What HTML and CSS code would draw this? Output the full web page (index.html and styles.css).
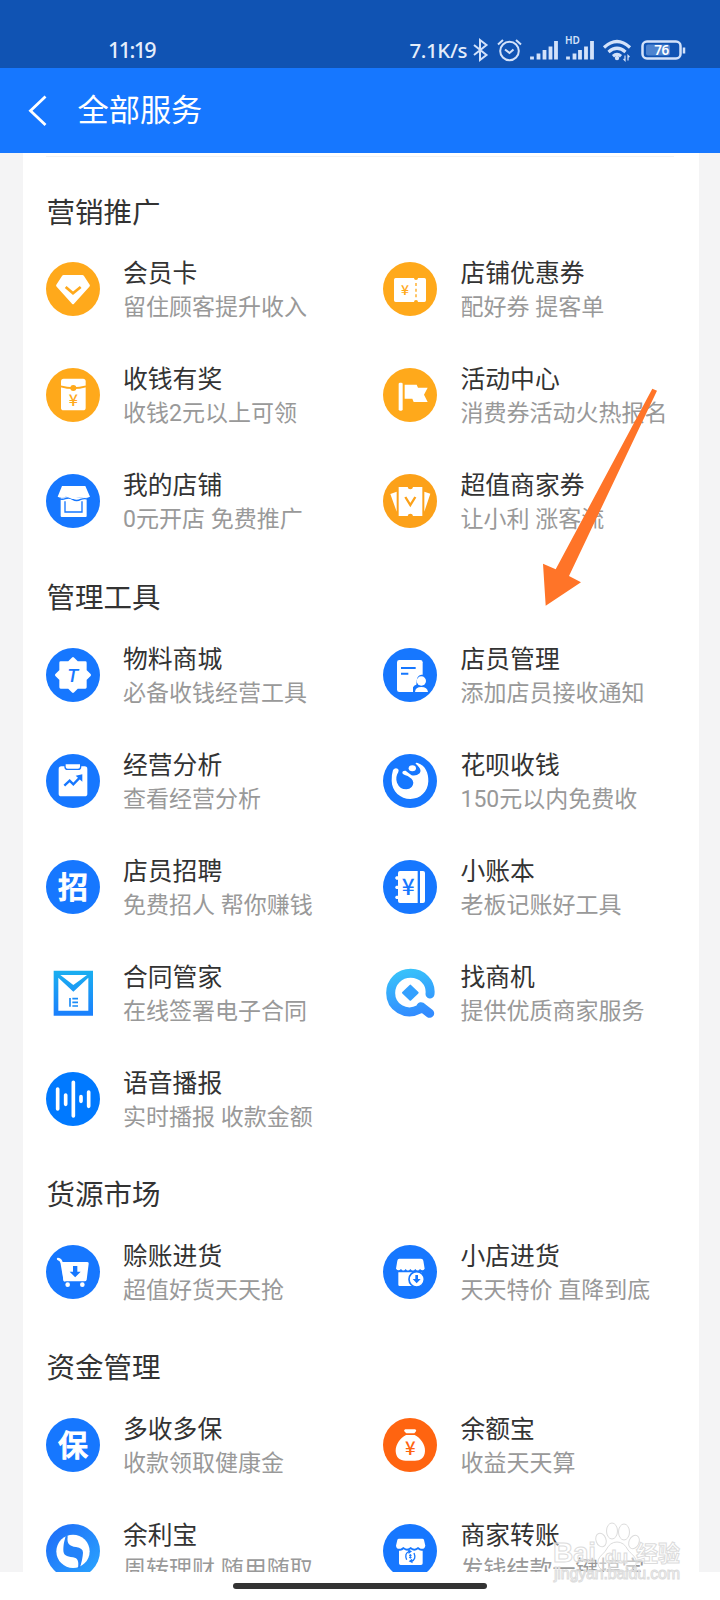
FILE: index.html
```html
<!DOCTYPE html>
<html lang="zh-CN">
<head>
<meta charset="utf-8">
<title>全部服务</title>
<link rel="stylesheet" href="styles.css">
</head>
<body>
<div class="phone">
  <header class="status">
    <span class="time">11:19</span>
    <div class="status-right">
      <span class="speed">7.1K/s</span>
      <svg class="status-icons" viewBox="0 0 220 30" width="220" height="30" fill="none" stroke="#d3e2fa">
        <path d="M2 10 14.500 20 8 25V5l6.500 5L2 20" stroke-width="2"/>
        <g stroke-width="2"><circle cx="37.500" cy="16" r="9.300"/><path d="M33 14.500l4.500 3.500 4-3.500M26 9.500l5-4.500M49 9.500l-5-4.500"/></g>
        <g stroke-width="3.800"><path d="M60 24.500v-3M66.500 24.500v-6M72.500 24.500v-9.500M78.500 24.500v-13M84 24.500v-18.500"/><path d="M96 24.500v-3M102.500 24.500v-6M108 24.500v-9.500M114 24.500v-13M120 24.500v-18.500"/></g>
        <g stroke-width="3.200"><path d="M132 12.500q13-12 26 0M136.500 17q8.500-7.500 17 0M141 21.200q4-3.500 8 0"/></g>
        <circle cx="145" cy="23" r="2.200" fill="#d3e2fa" stroke="none"/>
        <path d="M153 20.500v5l-1.500-1.500M156 25.500v-5l1.500 1.500" stroke-width="1.200"/>
        <rect x="170.500" y="6.500" width="38" height="17" rx="4.500" stroke-width="2.500"/>
        <rect x="174" y="9.500" width="24" height="11" rx="2" fill="#4d83cf" stroke="none"/>
        <path d="M212 12.500v6" stroke-width="2.500"/>
        <text class="hd" x="93" y="8.500">HD</text>
        <text class="battery" x="189.500" y="20" text-anchor="middle">76</text>
      </svg>
    </div>
  </header>
  <nav class="navbar">
    <svg class="back" viewBox="0 0 20 32" width="20" height="32"><path d="M17.500 1.500 2.500 15.700 17.500 30"/></svg>
    <h1>全部服务</h1>
  </nav>

  <main class="viewport">
    <div class="card">
      <section>
        <h2>营销推广</h2>
        <div class="grid">
          <article><svg class="ico" viewBox="0 0 162 162"><circle class="y" cx="81" cy="81" r="81"/><path class="w" d="M53 39h56q3 0 5 3l17 26q2 3-1 6l-46 51q-3 3-6 0L32 74q-3-3-1-6l17-26q2-3 5-3Z"/><path class="ys" stroke-width="8" d="m59 75 22 19 23-19"/></svg><div><h3>会员卡</h3><p>留住顾客提升收入</p></div></article>
          <article><svg class="ico" viewBox="0 0 162 162"><circle class="y" cx="81" cy="81" r="81"/><path class="w" d="M38 48h55q0 6 6 6t6-6h19q5 0 5 5v62q0 5-5 5h-19q0-6-6-6t-6 6H38q-5 0-5-5V53q0-5 5-5Z"/><path class="ys" stroke-width="4" stroke-dasharray="9 8" d="M99 63v47"/><text class="yen yf" x="66" y="98" font-size="42">¥</text></svg><div><h3>店铺优惠券</h3><p>配好券 提客单</p></div></article>
          <article><svg class="ico" viewBox="0 0 162 162"><circle class="y" cx="81" cy="81" r="81"/><rect class="w" x="45" y="32" width="74" height="95" rx="8"/><path class="ys" stroke-width="5" d="M44 55q38 11 76 0"/><circle class="y" cx="82" cy="60" r="9"/><text class="yen yf" x="82" y="113" font-size="48">¥</text></svg><div><h3>收钱有奖</h3><p>收钱2元以上可领</p></div></article>
          <article><svg class="ico" viewBox="0 0 162 162"><circle class="y" cx="81" cy="81" r="81"/><rect class="w" x="47" y="44" width="12" height="84" rx="4"/><path class="w" d="M65 50h36l4 9h29l-11 21 11 22H92l-4-10H65Z"/></svg><div><h3>活动中心</h3><p>消费券活动火热报名</p></div></article>
          <article><svg class="ico" viewBox="0 0 162 162"><circle class="b" cx="81" cy="81" r="81"/><path class="w" d="M44 70h78v56q0 3-3 3H47q-3 0-3-3Z"/><path fill="none" stroke="#1677ff" stroke-width="4" d="M57 82v32h51V82M36 73q12 5 22 1 12-5 22 2 12 7 24 0 12-4 24 0"/><path class="w" d="M48 36h70l14 32q-13 6-24 2-12-3-22 4-7 3-13-1-11-8-21-3-9 2-17-2Z"/></svg><div><h3>我的店铺</h3><p>0元开店 免费推广</p></div></article>
          <article><svg class="ico" viewBox="0 0 162 162"><circle cx="81" cy="81" r="81" fill="#fca119"/><path class="w" d="m22 60 19-7v60ZM124 53l18 6-18 54Z"/><path class="w" d="M47 39h27q1 7 8 7t8-7h28v87H90q-1-7-8-7t-8 7H47Z"/><path stroke="#fca119" fill="none" stroke-width="7" d="m67 69 15 24 15-24"/></svg><div><h3>超值商家券</h3><p>让小利 涨客流</p></div></article>
        </div>
      </section>

      <section>
        <h2>管理工具</h2>
        <div class="grid">
          <article><svg class="ico" viewBox="0 0 162 162"><circle class="b" cx="81" cy="81" r="81"/><path class="w" stroke="#fff" stroke-width="8" stroke-linejoin="round" d="m81 31 13 13h24v24l13 13-13 13v24H94l-13 13-13-13H44V94L31 81l13-13V44h24Z"/><text class="tee" x="80" y="101">T</text></svg><div><h3>物料商城</h3><p>必备收钱经营工具</p></div></article>
          <article><svg class="ico" viewBox="0 0 162 162"><circle class="b" cx="81" cy="81" r="81"/><rect class="w" x="42" y="36" width="77" height="96" rx="7"/><path class="bs" stroke-width="6" d="M54 60h44M54 77h22"/><path class="b" d="M90 138V118q4-8 10-8 0-30 15-30h12v58Z"/><circle class="w" cx="115" cy="99" r="14"/><path class="w" d="M96 132q1-15 19-15t20 15Z"/></svg><div><h3>店员管理</h3><p>添加店员接收通知</p></div></article>
          <article><svg class="ico" viewBox="0 0 162 162"><circle class="b" cx="81" cy="81" r="81"/><rect class="w" x="38" y="37" width="86" height="90" rx="8"/><path class="w" stroke="#1677ff" stroke-width="4" d="M57 29h47v9q0 8-8 8H65q-8 0-8-8Z"/><path class="bs" stroke-width="7" d="m55 95 16-15 11 11 20-21"/><path class="b" d="m89 65 20-4v22Z"/></svg><div><h3>经营分析</h3><p>查看经营分析</p></div></article>
          <article><svg class="ico" viewBox="0 0 162 162"><circle class="b" cx="81" cy="81" r="81"/><path class="w" d="M30 48q6-8 14-4 5 3 2 10C40 64 38 74 42 86q8 20 28 20 20-2 21-20c-1-10-8-14-17-20q-15-4-16-9 0-8 10-7 10 8 18 14 14 3 24-6 6-8-2-18-5-8-10-11-1-4 6-2C128 35 137 58 136 82c-1 32-25 53-54 53S26 112 26 80q0-20 4-32Z"/><ellipse class="w" cx="88" cy="43" rx="11" ry="9"/></svg><div><h3>花呗收钱</h3><p>150元以内免费收</p></div></article>
          <article><svg class="ico" viewBox="0 0 162 162"><circle class="b" cx="81" cy="81" r="81"/><text class="glyph" x="81" y="115">招</text></svg><div><h3>店员招聘</h3><p>免费招人 帮你赚钱</p></div></article>
          <article><svg class="ico" viewBox="0 0 162 162"><circle class="b" cx="81" cy="81" r="81"/><path class="w" d="M51 33h53v96H51q-6 0-6-6v-6h-5q-7-5 0-10h5V87h-5q-7-5 0-10h5V59h-5q-7-5 0-10h5V39q0-6 6-6ZM111 33h9q6 0 6 6v84q0 6-6 6h-9Z"/><text class="yen bf" x="76" y="105" font-size="68">¥</text></svg><div><h3>小账本</h3><p>老板记账好工具</p></div></article>
          <article><svg class="ico" viewBox="0 0 162 162"><defs><linearGradient id="mail" x2="0" y2="1"><stop stop-color="#1aaff0"/><stop offset="1" stop-color="#1a7ffd"/></linearGradient></defs><path fill="url(#mail)" d="M23 14h118v135H23Z"/><path class="w" d="M37 35v99h90V35L82 77Z"/><path class="w" d="M43 27h80L82 57Z"/><path stroke="#1a8cf8" stroke-width="5" d="M72 96v26M79 98h17M79 109h17M79 120h17"/></svg><div><h3>合同管家</h3><p>在线签署电子合同</p></div></article>
          <article><svg class="ico" viewBox="0 0 162 162"><defs><linearGradient id="find" gradientUnits="userSpaceOnUse" x1="60" y1="10" x2="90" y2="150"><stop stop-color="#38c3fa"/><stop offset="1" stop-color="#328bff"/></linearGradient></defs><path fill="none" stroke="url(#find)" stroke-width="27" stroke-linecap="round" stroke-linejoin="round" d="M141 84c4-35-24-62-58-62C49 22 23 48 23 81c0 42 44 71 86 49l5-8 26 20"/><path fill="#34a1ff" stroke="#34a1ff" stroke-width="6" stroke-linejoin="round" d="m82 59 22 21-22 21-22-21Z"/></svg><div><h3>找商机</h3><p>提供优质商家服务</p></div></article>
          <article><svg class="ico" viewBox="0 0 162 162"><circle cx="81" cy="81" r="81" fill="#0079ff"/><path stroke="#fff" stroke-width="11" stroke-linecap="round" d="M35 51v60M59 69v28M82 31v101M105 74v14M128 60v43"/></svg><div><h3>语音播报</h3><p>实时播报 收款金额</p></div></article>
        </div>
      </section>

      <section>
        <h2>货源市场</h2>
        <div class="grid">
          <article><svg class="ico" viewBox="0 0 162 162"><circle class="b" cx="81" cy="81" r="81"/><path fill="none" stroke="#fff" stroke-width="7" stroke-linecap="round" d="M36 42q9 1 11 12l9 52"/><path class="w" d="M47 51h76q6 0 5 6l-6 47q-1 5-6 5H57q-5 0-5-5Z"/><circle class="w" cx="65" cy="119" r="7"/><circle class="w" cx="109" cy="119" r="7"/><path class="b" d="M81 63h13v17h10L87.500 97 71 80h10Z"/></svg><div><h3>赊账进货</h3><p>超值好货天天抢</p></div></article>
          <article><svg class="ico" viewBox="0 0 162 162"><circle class="b" cx="81" cy="81" r="81"/><path class="w" d="M49 41h65q6 0 7 6l4 24q-6 9-14 1-7 9-14 0-7 9-15 0-7 9-14 0-7 9-14 0-8 8-15-1l4-24q1-6 6-6ZM46 82h70v41H50q-4 0-4-4Z"/><circle class="w" cx="101" cy="103" r="23" stroke="#1677ff" stroke-width="5"/><path class="b" d="M97 90h8v12h8l-12 13-12-13h8Z"/></svg><div><h3>小店进货</h3><p>天天特价 直降到底</p></div></article>
        </div>
      </section>

      <section>
        <h2>资金管理</h2>
        <div class="grid">
          <article><svg class="ico" viewBox="0 0 162 162"><circle class="b" cx="81" cy="81" r="81"/><text class="glyph" x="81" y="115">保</text></svg><div><h3>多收多保</h3><p>收款领取健康金</p></div></article>
          <article><svg class="ico" viewBox="0 0 162 162"><circle cx="81" cy="81" r="81" fill="#ff6410"/><path class="w" d="M67 34h29q6 2 2 7l-4 5H70l-5-5q-4-5 2-7ZM69 51h26c18 9 32 29 31 48-1 22-14 29-30 29H68c-18 0-29-9-30-29 0-20 14-39 31-48Z"/><text class="yen of" x="82" y="110" font-size="56">¥</text></svg><div><h3>余额宝</h3><p>收益天天算</p></div></article>
          <article><svg class="ico" viewBox="0 0 162 162"><defs><linearGradient id="yu" x2="1" y2="1"><stop stop-color="#1d69f8"/><stop offset="1" stop-color="#2ba7ff"/></linearGradient></defs><circle cx="81" cy="81" r="81" fill="url(#yu)"/><circle class="w" cx="81" cy="82" r="50"/><path fill="#2382fa" d="M61 30q4 2 4 8c-3 22 6 28 25 31q21 3 21 17-1 20-10 47l-5-1c3-19 0-30-15-32-20-3-29-6-29-22 0-18 3-28 9-48Z"/></svg><div><h3>余利宝</h3><p>周转理财 随用随取</p></div></article>
          <article><svg class="ico" viewBox="0 0 162 162"><circle class="b" cx="81" cy="81" r="81"/><path class="w" d="M48 44h70q4 0 5 4l4 17q-3 12-14 9l-8-5q-11 11-22 0-11 11-22 0l-8 5q-12 3-14-9l4-17q1-4 5-4ZM48 80q10 1 14-4 10 8 21 0 11 8 22 0 4 5 14 4v38q0 5-5 5H53q-5 0-5-5Z"/><path class="bs" stroke-width="4" d="M71 107q-8-19 8-25M93 87q8 19-8 25"/><path class="b" d="m75 76 12 6-10 8ZM89 118l-12-6 10-8Z"/><path class="bs" stroke-width="3" d="M78 94h8M78 100h8M82 90v14"/></svg><div><h3>商家转账</h3><p>发钱结款一键搞定</p></div></article>
        </div>
      </section>
    </div>
  </main>
  <footer class="home"><span></span></footer>

  <svg class="arrow" viewBox="0 0 720 1600" width="720" height="1600"><path d="M652.300 388.700 657 390.700 569 576l12 6.300-35.300 23.400L543 563.700l12.700 5.600Z"/></svg>
  <svg class="mark" viewBox="0 0 140 70" width="140" height="70">
    <g class="ink">
      <ellipse cx="55" cy="20" rx="5" ry="7" transform="rotate(-20 55 20)"/><ellipse cx="66" cy="11" rx="5.500" ry="8"/><ellipse cx="78" cy="12" rx="5.500" ry="8"/><ellipse cx="88" cy="22" rx="5" ry="7" transform="rotate(25 88 22)"/>
      <path d="M71 22q7 0 11 8c4 5 9 7 8 14s-9 8-19 7c-10 1-18 0-19-7s5-9 8-14q4-8 11-8Z"/>
      <text x="7" y="42" font-size="28" font-weight="700" textLength="43">Bai</text>
      <text x="59" y="43" font-size="19" font-weight="700">du</text>
      <text x="90" y="41" font-size="22" font-weight="700" textLength="44">经验</text>
      <text x="8" y="59" font-size="16" textLength="126">jingyan.baidu.com</text>
    </g>
  </svg>
</div>
</body>
</html>
```

FILE: styles.css
```css
* { box-sizing: border-box; }
body, h1, h2, h3, p { margin: 0; font-weight: 400; }
body {
  width: 720px;
  height: 1600px;
  overflow: hidden;
  font-family: Roboto, "Noto Sans CJK SC", sans-serif;
  background: #fff;
}
.phone {
  position: relative;
  display: flex;
  flex-direction: column;
  width: 720px;
  height: 1600px;
  overflow: hidden;
}
.status {
  display: flex;
  justify-content: space-between;
  height: 68px;
  padding: 35px 28px 0 108px;
  background: #1053b3;
  color: #e4edfb;
  font-family: "Noto Sans", sans-serif;
  font-weight: 500;
  line-height: 30px;
}
.time { font-size: 21.500px; letter-spacing: -1.600px; }
.status-right { display: flex; gap: 5px; }
.speed { font-size: 20.500px; letter-spacing: -.4px; }
.hd { font: 600 10px "Noto Sans", sans-serif; fill: #d3e2fa; stroke: none; }
.battery { font: 600 13.500px "Noto Sans", sans-serif; letter-spacing: -.5px; fill: #fff; stroke: none; }
.navbar {
  display: flex;
  align-items: center;
  gap: 29.500px;
  height: 85px;
  padding-left: 28px;
  background: #1677ff;
  color: #fff;
}
.navbar h1 { font-size: 31.200px; line-height: 40px; }
.back { fill: none; stroke: #fff; stroke-width: 2.800; }
.viewport {
  height: 1419px;
  padding: 0 21px 0 22.500px;
  overflow: hidden;
  background: #f4f4f5;
}
.card {
  padding: 0 0 0 23px;
  background: linear-gradient(#f2f2f2, #f2f2f2) 23px 3px / 628px 1px no-repeat #fff;
}
section:first-child h2 { height: 109.300px; padding-top: 40.500px; }
h2 {
  height: 119.250px;
  padding: 50.500px 0 0 1px;
  color: #333;
  font-size: 28.500px;
  line-height: 40px;
}
.grid {
  display: grid;
  grid-template-columns: 337.500px 1fr;
  grid-auto-rows: 54px;
  row-gap: 52px;
}
article { display: flex; gap: 23.500px; height: 54px; }
.ico { flex: none; width: 54px; height: 54px; }
h3 {
  margin-top: -5px;
  color: #333;
  font-size: 24.800px;
  line-height: 34px;
  white-space: nowrap;
}
p {
  color: #999;
  font-size: 23px;
  line-height: 34px;
  white-space: nowrap;
}
.y, .yf { fill: #ffa91b; }
.b, .bf { fill: #1677ff; }
.of { fill: #ff6410; }
.w { fill: #fff; }
.ys { fill: none; stroke: #ffa91b; stroke-linecap: butt; }
.bs { fill: none; stroke: #1677ff; }
.yen { font-family: "Noto Sans CJK SC", sans-serif; font-weight: 500; text-anchor: middle; }
.tee { font: italic 500 56px Roboto, sans-serif; fill: #1677ff; text-anchor: middle; }
.glyph { font: 500 90px "Noto Sans CJK SC", sans-serif; fill: #fff; stroke: #fff; stroke-width: 3; text-anchor: middle; }
.home {
  display: flex;
  justify-content: center;
  height: 28px;
  padding-top: 11px;
  background: #fff;
}
.home span { width: 254px; height: 6px; border-radius: 3px; background: #333; }
.arrow { position: absolute; left: 0; top: 0; fill: #ff7428; }
.mark { position: absolute; left: 546px; top: 1520px; }
.ink {
  fill: rgba(255, 255, 255, .45);
  stroke: #dcdcdc;
  stroke-width: 1;
  font-family: "Liberation Sans", "Noto Sans CJK SC", sans-serif;
}
```
